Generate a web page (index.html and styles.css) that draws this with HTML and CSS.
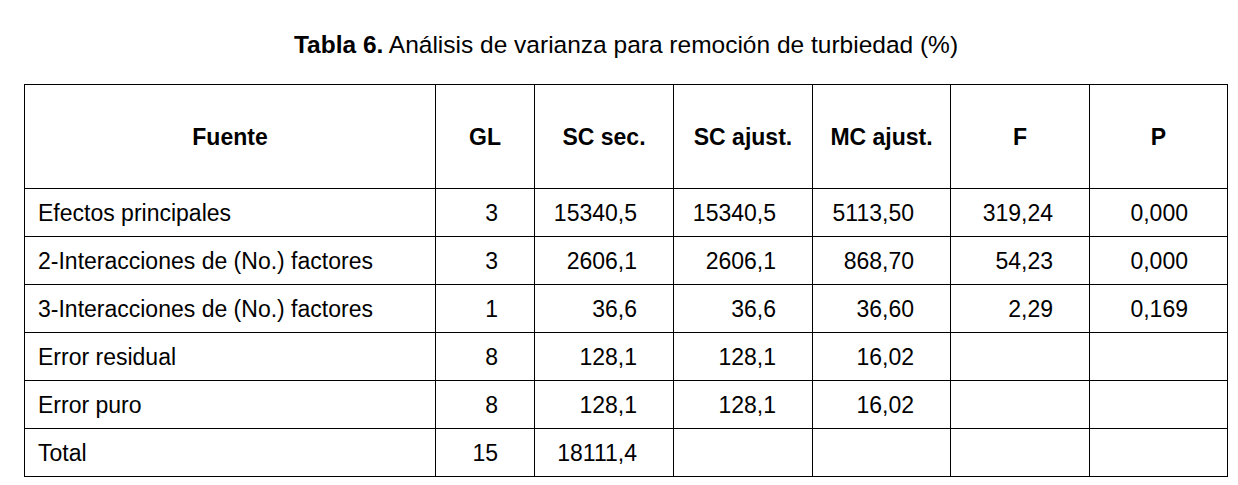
FILE: index.html
```html
<!DOCTYPE html>
<html lang="es">
<head>
    <meta charset="UTF-8">
    <title>Tabla 6</title>
    <link rel="stylesheet" href="styles.css">
</head>
<body>
    <div class="page">
        <p class="caption"><b>Tabla 6.</b> Análisis de varianza para remoción de turbiedad (%)</p>
        <table class="anova">
            <colgroup>
                <col class="c-fuente">
                <col class="c-gl">
                <col class="c-num">
                <col class="c-num">
                <col class="c-num2">
                <col class="c-num">
                <col class="c-num2">
            </colgroup>
            <thead>
                <tr>
                    <th>Fuente</th>
                    <th>GL</th>
                    <th>SC sec.</th>
                    <th>SC ajust.</th>
                    <th>MC ajust.</th>
                    <th>F</th>
                    <th>P</th>
                </tr>
            </thead>
            <tbody>
                <tr>
                    <td>Efectos principales</td>
                    <td class="num">3</td>
                    <td class="num">15340,5</td>
                    <td class="num">15340,5</td>
                    <td class="num">5113,50</td>
                    <td class="num">319,24</td>
                    <td class="num p">0,000</td>
                </tr>
                <tr>
                    <td>2-Interacciones de (No.) factores</td>
                    <td class="num">3</td>
                    <td class="num">2606,1</td>
                    <td class="num">2606,1</td>
                    <td class="num">868,70</td>
                    <td class="num">54,23</td>
                    <td class="num p">0,000</td>
                </tr>
                <tr>
                    <td>3-Interacciones de (No.) factores</td>
                    <td class="num">1</td>
                    <td class="num">36,6</td>
                    <td class="num">36,6</td>
                    <td class="num">36,60</td>
                    <td class="num">2,29</td>
                    <td class="num p">0,169</td>
                </tr>
                <tr>
                    <td>Error residual</td>
                    <td class="num">8</td>
                    <td class="num">128,1</td>
                    <td class="num">128,1</td>
                    <td class="num">16,02</td>
                    <td></td>
                    <td></td>
                </tr>
                <tr>
                    <td>Error puro</td>
                    <td class="num">8</td>
                    <td class="num">128,1</td>
                    <td class="num">128,1</td>
                    <td class="num">16,02</td>
                    <td></td>
                    <td></td>
                </tr>
                <tr>
                    <td>Total</td>
                    <td class="num">15</td>
                    <td class="num">18111,4</td>
                    <td></td>
                    <td></td>
                    <td></td>
                    <td></td>
                </tr>
            </tbody>
        </table>
    </div>
</body>
</html>
```

FILE: styles.css
```css
body {
    margin: 0;
    background-color: #fff;
    color: #000;
    font-family: "Liberation Sans", Arial, sans-serif;
}
.page {
    padding-left: 24px;
    width: 1204px;
}
.caption {
    margin: 0;
    padding-top: 31px;
    margin-bottom: 25px;
    height: 28px;
    line-height: 28px;
    font-size: 24.5px;
    text-align: center;
}
.anova {
    width: 1204px;
    border-collapse: collapse;
    table-layout: fixed;
    font-size: 23px;
}
.c-fuente {
    width: 411px;
}
.c-gl {
    width: 99px;
}
.c-num {
    width: 139px;
}
.c-num2 {
    width: 138px;
}
.anova th,
.anova td {
    border: 1px solid #000;
    padding: 0 0 0 13px;
    height: 47px;
    line-height: 26px;
    white-space: nowrap;
}
.anova th {
    height: 103px;
    padding: 0;
    text-align: center;
    font-weight: bold;
}
.anova td.num {
    text-align: right;
    padding: 0 36px 0 0;
}
.anova td.p {
    padding-right: 39px;
}
```
